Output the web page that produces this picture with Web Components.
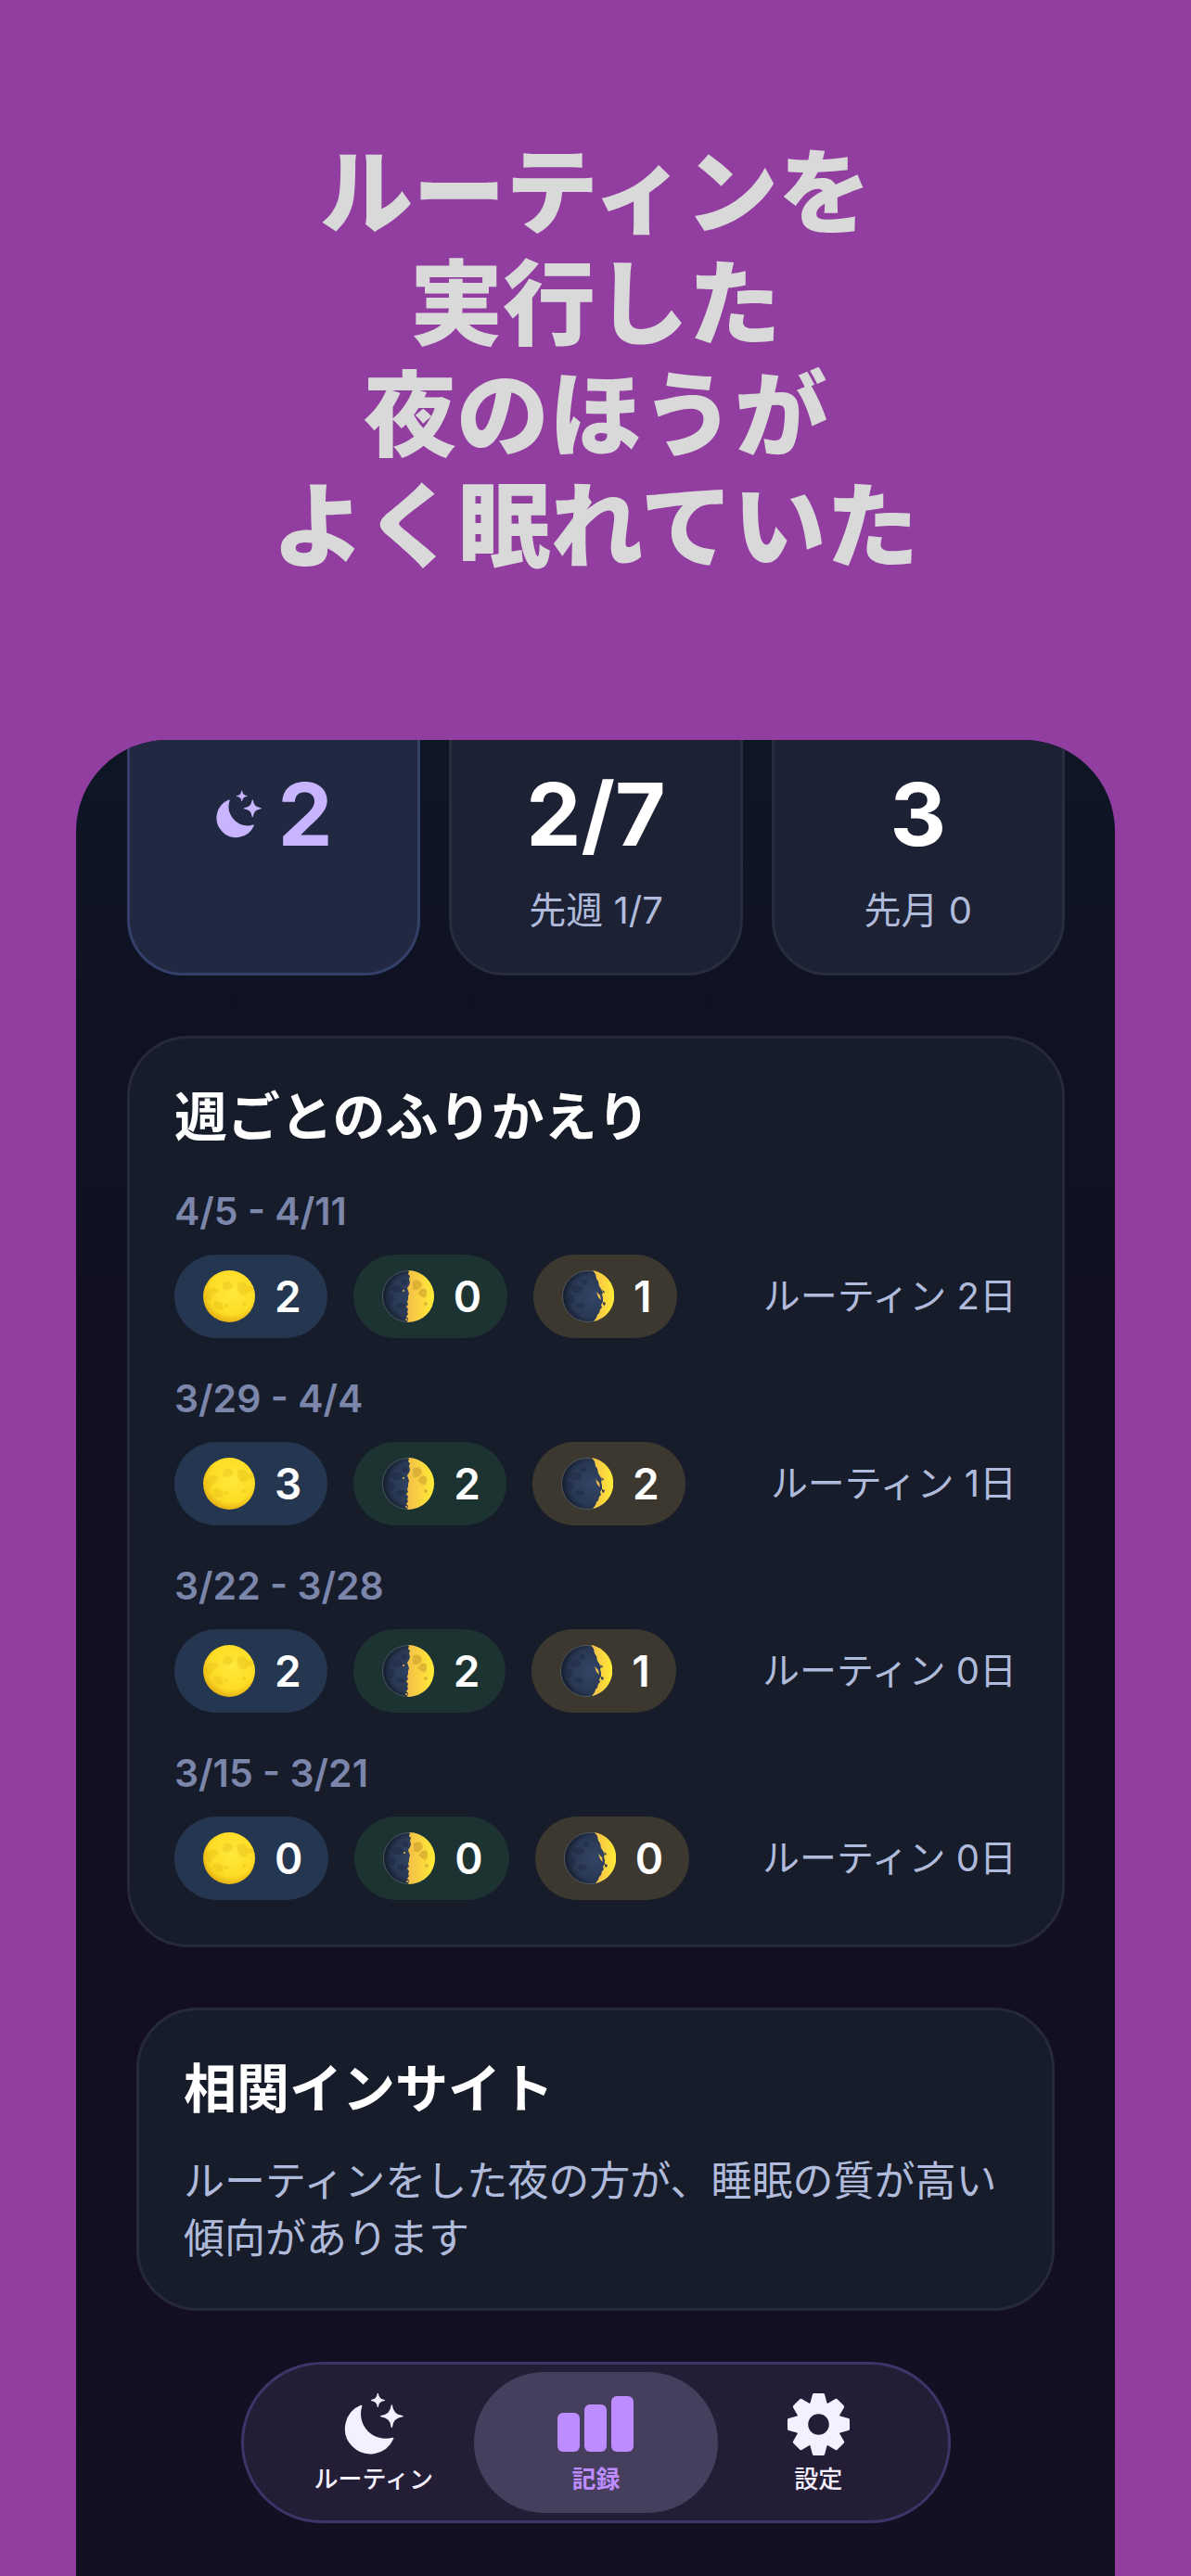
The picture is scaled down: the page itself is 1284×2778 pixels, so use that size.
<!DOCTYPE html>
<html lang="ja">
<head>
<meta charset="utf-8">
<meta name="viewport" content="width=device-width, initial-scale=1">
<title>記録</title>
<style>
  body {
    margin: 0;
    background: #923ea1;
    font-family: Inter, "Noto Sans CJK JP", sans-serif;
    color: #ffffff;
  }
</style>
</head>
<body>
<promo-page>
  <span slot="headline">ルーティンを<br>実行した<br>夜のほうが<br>よく眠れていた</span>

  <stat-row>
    <stat-card highlight><moon-stars slot="icon"></moon-stars>2</stat-card>
    <stat-card>2/7<span slot="note">先週 1/7</span></stat-card>
    <stat-card>3<span slot="note">先月 0</span></stat-card>
  </stat-row>

  <info-card heading="週ごとのふりかえり">
    <week-row range="4/5 - 4/11" full="2" half="0" crescent="1" days="2"></week-row>
    <week-row range="3/29 - 4/4" full="3" half="2" crescent="2" days="1"></week-row>
    <week-row range="3/22 - 3/28" full="2" half="2" crescent="1" days="0"></week-row>
    <week-row range="3/15 - 3/21" full="0" half="0" crescent="0" days="0"></week-row>
  </info-card>

  <info-card heading="相関インサイト" inset>
    <insight-text>ルーティンをした夜の方が、睡眠の質が高い傾向があります</insight-text>
  </info-card>

  <tab-bar slot="tabs">
    <tab-item><moon-stars></moon-stars><span slot="label">ルーティン</span></tab-item>
    <tab-item selected><bars-icon></bars-icon><span slot="label">記録</span></tab-item>
    <tab-item><gear-icon></gear-icon><span slot="label">設定</span></tab-item>
  </tab-bar>
</promo-page>

<script>
// Attach an open shadow root and fill it
function mount(el, html) {
  if (!el.shadowRoot) el.attachShadow({ mode: 'open' });
  el.shadowRoot.innerHTML = html;
}

class PromoPage extends HTMLElement {
  connectedCallback() {
    mount(this, `
      <style>
        :host {
          display: flex;
          flex-direction: column;
          min-height: 100vh;
          padding: 148px 82px 0;
          box-sizing: border-box;
        }
        h1 {
          margin: 0 0 170px;
          text-align: center;
          font-size: 100px;
          line-height: 120px;
          font-weight: 900;
          color: #d9d9d9;
        }
        main {
          flex: 1;
          display: flex;
          flex-direction: column;
          gap: 65px;
          padding: 0 54px 58px 55px;
          border-radius: 98px 98px 0 0;
          overflow: hidden;
          background: linear-gradient(180deg, #0e1625 0%, #101223 14%, #110f20 45%, #140f22 100%);
        }
        footer {
          margin-top: -10px;
          padding: 0 123px;
        }
      </style>
      <h1><slot name="headline"></slot></h1>
      <main>
        <slot></slot>
        <footer><slot name="tabs"></slot></footer>
      </main>
    `);
  }
}

class StatRow extends HTMLElement {
  connectedCallback() {
    mount(this, `
      <style>
        :host {
          display: grid;
          grid-template-columns: repeat(3, 1fr);
          gap: 31px;
        }
      </style>
      <slot></slot>
    `);
  }
}

class StatCard extends HTMLElement {
  connectedCallback() {
    mount(this, `
      <style>
        :host {
          display: block;
          box-sizing: border-box;
          padding: 40px 20px 43px;
          border: 3px solid #282d3e;
          border-top: none;
          border-radius: 0 0 60px 60px;
          background: #1d2134;
          text-align: center;
        }
        :host([highlight]) {
          background: #202941;
          border-color: #33406a;
          color: #c9b4ff;
        }
        .value {
          display: flex;
          justify-content: center;
          align-items: center;
          gap: 18px;
          font-size: 94px;
          line-height: 80px;
          font-weight: 700;
        }
        .note {
          margin-top: 40px;
          font-size: 40px;
          line-height: 48px;
          color: #b0bbdb;
        }
        ::slotted(moon-stars) {
          width: 50px;
        }
      </style>
      <div class="value"><slot name="icon"></slot><span><slot></slot></span></div>
      <div class="note"><slot name="note"></slot></div>
    `);
  }
}

class InfoCard extends HTMLElement {
  connectedCallback() {
    mount(this, `
      <style>
        :host {
          display: block;
          padding: 49px 49px 48px 48px;
          border: 3px solid #262939;
          border-radius: 66px;
          background: #171c2b;
        }
        :host([inset]) {
          margin: 0 11px 0 10px;
          padding-bottom: 44px;
        }
        h2 {
          margin: 0;
          font-size: 57px;
          line-height: 72px;
          font-weight: 700;
        }
      </style>
      <h2>${this.getAttribute('heading')}</h2>
      <slot></slot>
    `);
  }
}

class InsightText extends HTMLElement {
  connectedCallback() {
    mount(this, `
      <style>
        :host {
          display: block;
          margin-top: 32px;
          font-size: 44px;
          line-height: 62px;
          color: #b0bbdb;
        }
        p { margin: 0; }
      </style>
      <p><slot></slot></p>
    `);
  }
}

class WeekRow extends HTMLElement {
  connectedCallback() {
    const pills = ['full', 'half', 'crescent'].map(phase => `
      <moon-pill phase="${phase}">${this.getAttribute(phase)}</moon-pill>
    `).join('');

    mount(this, `
      <style>
        :host {
          display: block;
          margin-top: 40px;
        }
        .range {
          font-size: 41px;
          line-height: 50px;
          font-weight: 600;
          color: #7c86ab;
        }
        .row {
          display: flex;
          align-items: center;
          gap: 28px;
          margin-top: 22px;
        }
        .days {
          margin-left: auto;
          font-size: 40px;
          line-height: 48px;
          color: #b0bbdb;
        }
      </style>
      <div class="range">${this.getAttribute('range')}</div>
      <div class="row">
        ${pills}
        <span class="days">ルーティン ${this.getAttribute('days')}日</span>
      </div>
    `);
  }
}

const DARK_DISC = `
  <circle cx="28" cy="28" r="27.5" fill="url(#dark)" stroke="#59636b" stroke-width=".8"/>
  <g fill="#1f2a44" opacity=".5">
    <ellipse cx="16" cy="20" rx="6" ry="4"/><ellipse cx="10" cy="31" rx="3" ry="5"/>
    <ellipse cx="20" cy="38" rx="5" ry="3"/><circle cx="24" cy="13" r="3"/>
  </g>`;

const PHASES = {
  full: `
    <circle cx="28" cy="28" r="28" fill="url(#gold)"/>
    <g fill="#d9a90d" opacity=".26">
      <path d="M22 13q6-3 9 1t-3 7q-5 1-7-2z"/>
      <path d="M37 14q6-4 10 1t1 9q-4 5-8 1t-3-11z"/>
      <path d="M3 25q3-8 10-6t1 6q-6 4-5 8-5 0-6-8z"/>
      <path d="M11 34q7-2 10 3t-2 6q-9 0-8-9z"/>
      <circle cx="44" cy="36" r="2"/><circle cx="51" cy="20" r="3"/>
      <circle cx="25" cy="38" r="2"/>
    </g>`,
  half: `${DARK_DISC}
    <path fill="url(#lit)" d="M28 0A28 28 0 0 1 28 56l-1-1 1-3-2-2 2-3-1-2 1-3-2-3 2-2-1-3 1-3 0-3 1-3-1-3-1-3 2-3 1-3-1-4 1-3-2-2 1-3z"/>
    <g fill="#c99b2d" opacity=".55">
      <path d="M33 12q6-4 9 1t-4 8q-5 1-5-3z"/>
      <path d="M42 20q7-2 6 5t-6 3-3-4z"/><circle cx="47" cy="36" r="2"/>
    </g>
    <g fill="#f3bd4a"><circle cx="23" cy="22" r="1"/><circle cx="26" cy="53" r="1"/></g>`,
  crescent: `${DARK_DISC}
    <path fill="url(#lit)" d="M33 0A28 28 0 0 1 34 55l3-4 1-3 2-2 1-4 2-2-1-3 2-3 0-4-1-4 1-2-2-4-2-3-1-5-2-3-1-5z"/>
    <path fill="#f3bd4a" d="M37 23l4 4 1 5-3-3z"/>
    <path fill="#3a4150" d="M43 21l3 2-1 2zM44 34l3 1-1 3-2-1z"/>`
};

class MoonPill extends HTMLElement {
  connectedCallback() {
    mount(this, `
      <style>
        :host {
          --pill: #253650;
          display: flex;
          align-items: center;
          gap: 21px;
          height: 90px;
          box-sizing: border-box;
          padding: 0 28px 0 31px;
          border-radius: 45px;
          background: var(--pill);
          font-size: 46px;
          font-weight: 600;
        }
        :host([phase="half"]) { --pill: #1c3331; }
        :host([phase="crescent"]) { --pill: #3d382f; }
        svg { width: 56px; height: 56px; }
      </style>
      <svg viewBox="0 0 56 56" aria-hidden="true">
        <defs>
          <radialGradient id="gold" cx=".55" cy=".42" r=".62">
            <stop offset="0" stop-color="#ffe93a"/>
            <stop offset=".7" stop-color="#fddc25"/>
            <stop offset="1" stop-color="#dfa70f"/>
          </radialGradient>
          <linearGradient id="lit" x1="0" x2="1">
            <stop offset="0" stop-color="#f3bd4a"/>
            <stop offset="1" stop-color="#ffec35"/>
          </linearGradient>
          <radialGradient id="dark" cx=".6" cy=".5" r=".62">
            <stop offset="0" stop-color="#334566"/>
            <stop offset=".7" stop-color="#293853"/>
            <stop offset="1" stop-color="#0f1726"/>
          </radialGradient>
        </defs>
        ${PHASES[this.getAttribute('phase')]}
      </svg>
      <span><slot></slot></span>
    `);
  }
}

class TabBar extends HTMLElement {
  connectedCallback() {
    mount(this, `
      <style>
        :host { display: block; }
        nav {
          display: grid;
          grid-template-columns: repeat(3, 1fr);
          padding: 8px 20px;
          border: 3px solid #3d3468;
          border-radius: 87px;
          background: #231e36;
        }
      </style>
      <nav><slot></slot></nav>
    `);
  }
}

class TabItem extends HTMLElement {
  connectedCallback() {
    mount(this, `
      <style>
        :host {
          display: block;
          margin: 0 -12px;
        }
        button {
          display: flex;
          flex-direction: column;
          align-items: center;
          gap: 10px;
          width: 100%;
          height: 152px;
          padding: 22px 0 0;
          border: none;
          border-radius: 76px;
          background: none;
          color: #f4f0ff;
          font: 500 26px/32px Inter, "Noto Sans CJK JP", sans-serif;
          cursor: pointer;
        }
        .icon {
          display: flex;
          align-items: center;
          height: 68px;
        }
        :host([selected]) button {
          background: #453e5c;
          color: #bd8cff;
          font-weight: 700;
        }
      </style>
      <button type="button"${this.hasAttribute('selected') ? ' aria-current="page"' : ''}>
        <span class="icon"><slot></slot></span>
        <slot name="label"></slot>
      </button>
    `);
  }
}

class MoonStars extends HTMLElement {
  connectedCallback() {
    mount(this, `
      <style>
        :host { display: block; width: 65px; }
        svg { display: block; width: 100%; }
      </style>
      <svg viewBox="43 50 195 205" fill="currentColor" stroke="currentColor" stroke-linejoin="round" aria-hidden="true">
        <path stroke-width="6" d="M101 94A79 79 0 1 0 203 199A83 83 0 0 1 101 94Z"/>
        <path stroke-width="3" d="M155 53Q157 73 177 75.500Q157 78 155 97Q153 78 133 75.500Q153 73 155 53Z"/>
        <path stroke-width="4" d="M200 92Q203 123 235 127Q203 131 200 162Q197 131 165 127Q197 123 200 92Z"/>
      </svg>
    `);
  }
}

class BarsIcon extends HTMLElement {
  connectedCallback() {
    mount(this, `
      <style>
        :host { display: block; }
        svg { display: block; width: 82px; height: 60px; }
      </style>
      <svg viewBox="0 0 82 60" fill="currentColor" aria-hidden="true">
        <rect x="0" y="18" width="24" height="42" rx="6"/>
        <rect x="29" y="9" width="24" height="51" rx="6"/>
        <rect x="58" y="0" width="24" height="60" rx="6"/>
      </svg>
    `);
  }
}

class GearIcon extends HTMLElement {
  connectedCallback() {
    const teeth = [0, 45, 90, 135, 180, 225, 270, 315].map(a =>
      `<path transform="rotate(${a})" d="M-23 -66L-15 -96H15L23 -66Z"/>`
    ).join('');

    mount(this, `
      <style>
        :host { display: block; }
        svg { display: block; width: 67px; height: 67px; }
      </style>
      <svg viewBox="-101 -101 202 202" aria-hidden="true">
        <circle r="54" fill="none" stroke="currentColor" stroke-width="40"/>
        <g fill="currentColor" stroke="currentColor" stroke-width="10" stroke-linejoin="round">${teeth}</g>
      </svg>
    `);
  }
}

customElements.define('promo-page', PromoPage);
customElements.define('stat-row', StatRow);
customElements.define('stat-card', StatCard);
customElements.define('info-card', InfoCard);
customElements.define('insight-text', InsightText);
customElements.define('week-row', WeekRow);
customElements.define('moon-pill', MoonPill);
customElements.define('tab-bar', TabBar);
customElements.define('tab-item', TabItem);
customElements.define('moon-stars', MoonStars);
customElements.define('bars-icon', BarsIcon);
customElements.define('gear-icon', GearIcon);
</script>
</body>
</html>
